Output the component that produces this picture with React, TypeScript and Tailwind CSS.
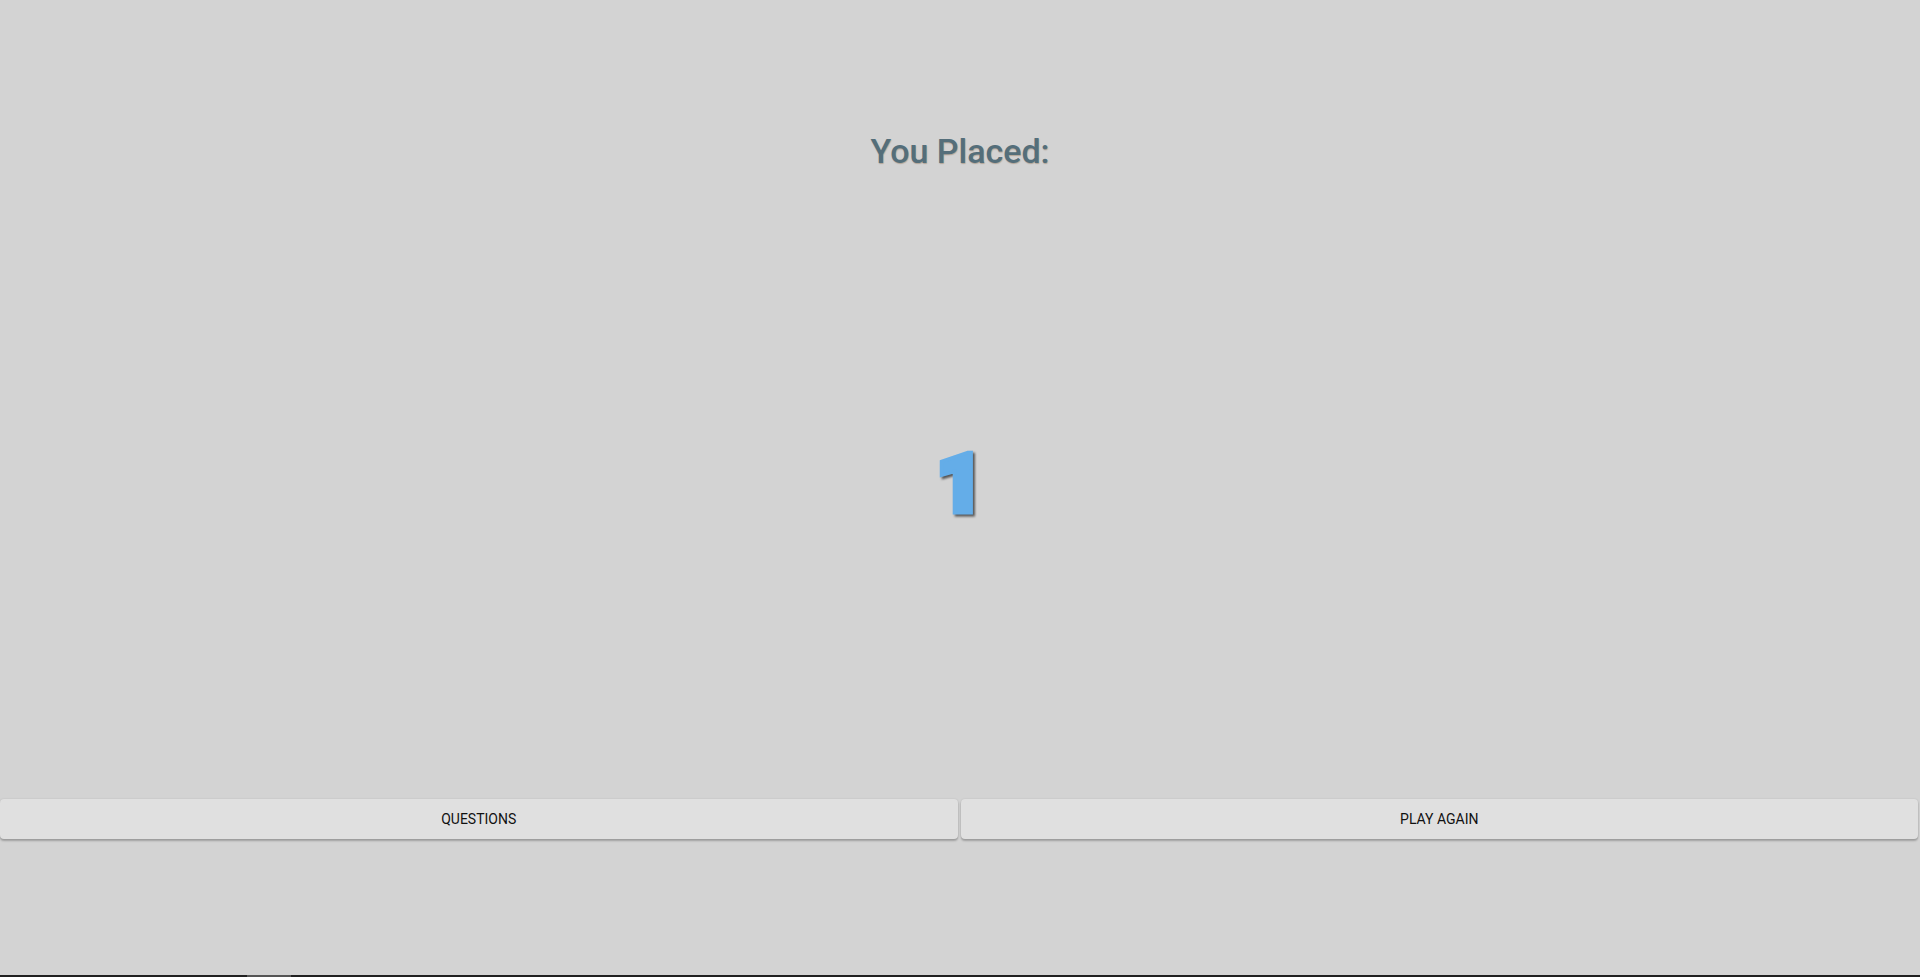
export default function App() {
  return (
    <div className="min-h-screen bg-[#d3d3d3] flex flex-col font-['Roboto',sans-serif]">
      <h1
        className="mt-[131px] text-center text-[34px] leading-[40px] font-medium text-[#546e7a]"
        style={{ textShadow: "0.5px 0.5px 1px rgba(120,80,40,0.35)" }}
      >
        You Placed:
      </h1>

      <div className="mt-[273px] text-center text-[80px] leading-none font-black text-[#64ade8] [-webkit-text-stroke:7px_#64ade8] [paint-order:stroke_fill] drop-shadow-[2px_2px_1px_rgba(0,0,0,0.6)]">
        1
      </div>

      <div className="mt-[275px] flex gap-[3px] pr-[2px]">
        <button className="flex-1 h-10 rounded bg-[#e0e0e0] text-sm font-normal uppercase text-[#111111] shadow-[0_2px_2px_rgba(0,0,0,0.24),0_0_2px_rgba(0,0,0,0.12)]">
          Questions
        </button>
        <button className="flex-1 h-10 rounded bg-[#e0e0e0] text-sm font-normal uppercase text-[#111111] shadow-[0_2px_2px_rgba(0,0,0,0.24),0_0_2px_rgba(0,0,0,0.12)]">
          Play Again
        </button>
      </div>

      <div className="mt-auto h-[2px] bg-[#1f1f1f] flex">
        <div className="ml-[247px] w-[44px] bg-[#555555]" />
      </div>
    </div>
  );
}
